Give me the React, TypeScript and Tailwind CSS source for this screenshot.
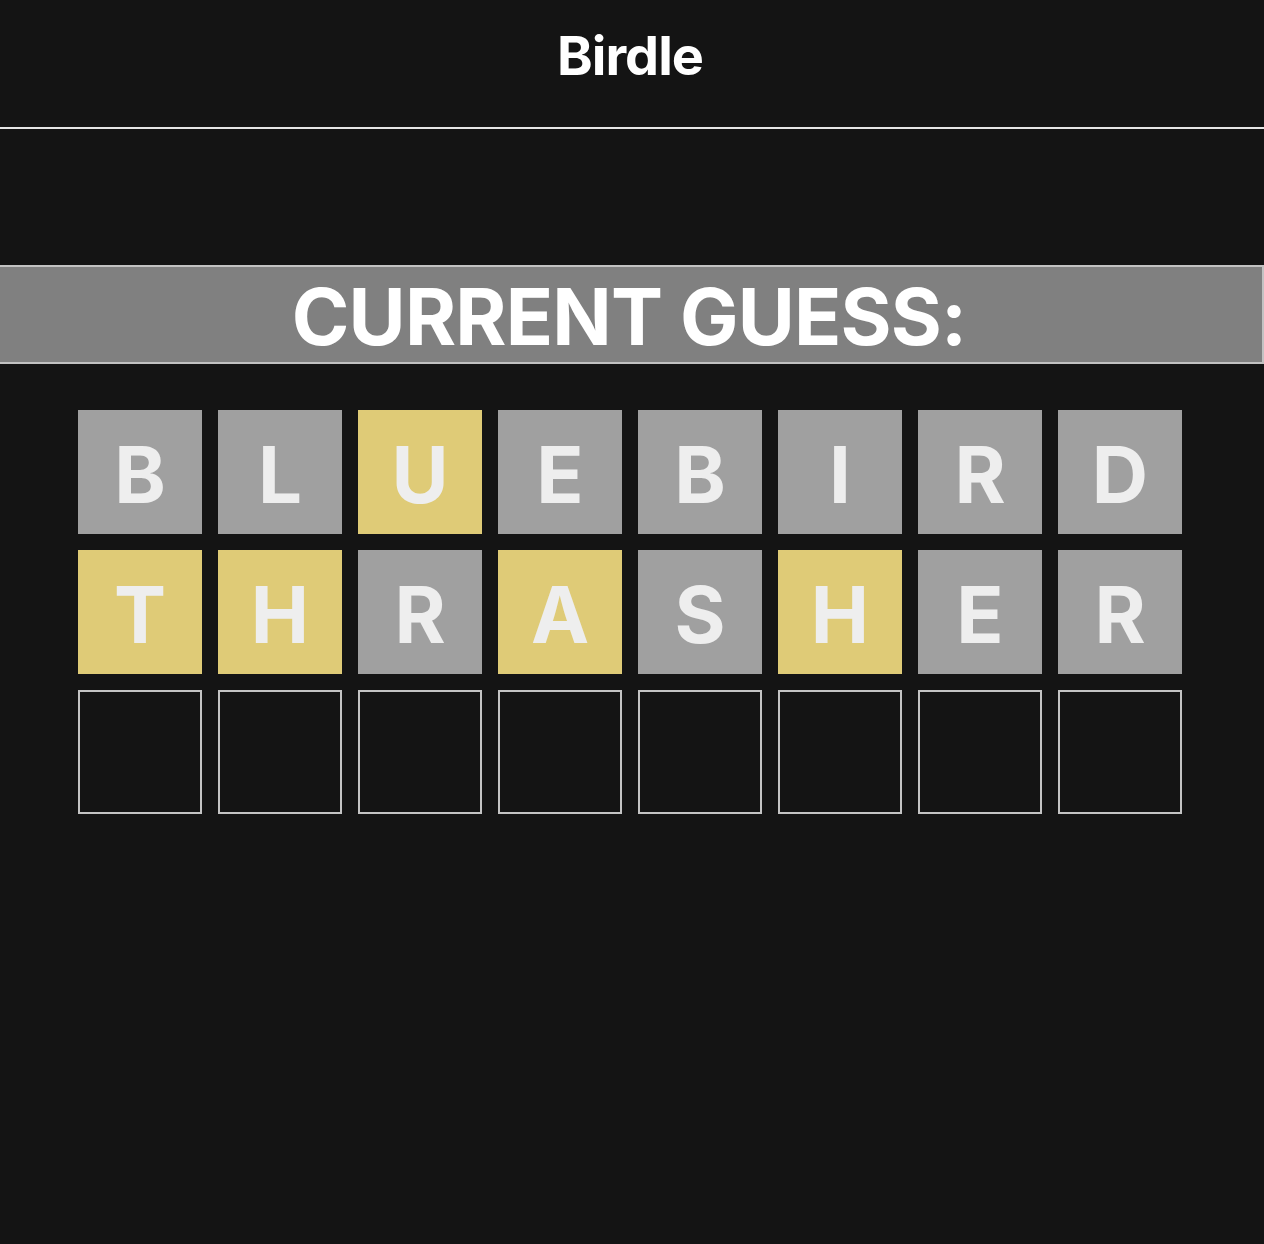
const rows: { letter: string; state: "absent" | "present" | "empty" }[][] = [
  [
    { letter: "B", state: "absent" },
    { letter: "L", state: "absent" },
    { letter: "U", state: "present" },
    { letter: "E", state: "absent" },
    { letter: "B", state: "absent" },
    { letter: "I", state: "absent" },
    { letter: "R", state: "absent" },
    { letter: "D", state: "absent" },
  ],
  [
    { letter: "T", state: "present" },
    { letter: "H", state: "present" },
    { letter: "R", state: "absent" },
    { letter: "A", state: "present" },
    { letter: "S", state: "absent" },
    { letter: "H", state: "present" },
    { letter: "E", state: "absent" },
    { letter: "R", state: "absent" },
  ],
  Array.from({ length: 8 }, () => ({ letter: "", state: "empty" as const })),
];

function Tile({ letter, state }: { letter: string; state: "absent" | "present" | "empty" }) {
  const color =
    state === "present"
      ? "bg-[#dfcb77]"
      : state === "absent"
        ? "bg-[#a0a0a0]"
        : "bg-[#141414] border-2 border-[#c4c4c4]";
  return (
    <div
      className={`w-[124px] h-[124px] flex items-center justify-center pt-[5px] text-[78px] font-bold text-[#eeeeee] leading-none ${color}`}
    >
      {letter}
    </div>
  );
}

export default function App() {
  return (
    <div
      className="min-h-[1244px] bg-[#141414] text-white"
      style={{ fontFamily: "Inter, 'Liberation Sans', sans-serif" }}
    >
      <header className="h-[129px] flex items-center justify-center border-b-2 border-[#e6e6e6] pr-1">
        <h1 className="text-[54px] font-bold tracking-[-1px] leading-none pb-4">Birdle</h1>
      </header>

      <div className="pt-[136px]">
        <div className="h-[99px] bg-[#808080] border-y-2 border-r-2 border-[#c2c2c2] flex items-center justify-center pr-1 pt-1">
          <h2 className="text-[78px] font-bold leading-none tracking-[-0.8px]">CURRENT GUESS:</h2>
        </div>
      </div>

      <div className="pt-[46px] flex flex-col items-center gap-4 pr-1">
        {rows.map((row, i) => (
          <div key={i} className="flex gap-4">
            {row.map((t, j) => (
              <Tile key={j} letter={t.letter} state={t.state} />
            ))}
          </div>
        ))}
      </div>
    </div>
  );
}
